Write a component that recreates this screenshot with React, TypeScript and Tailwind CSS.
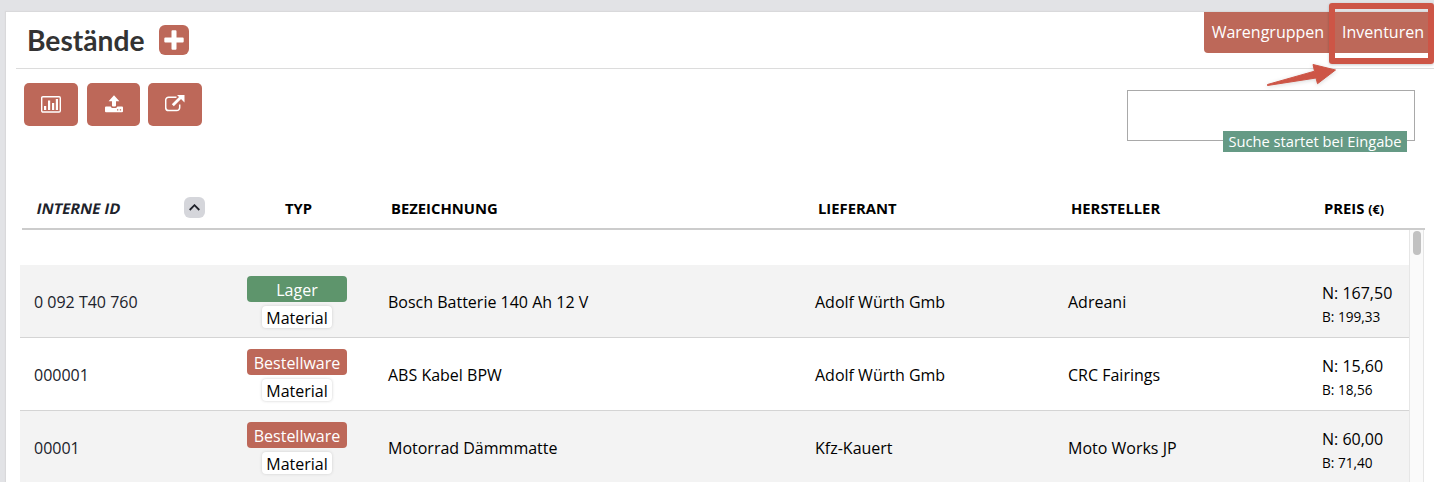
import { clsx } from 'clsx'

const artikel = [
    { id: '0 092 T40 760', typ: 'Lager', bezeichnung: 'Bosch Batterie 140 Ah 12 V', lieferant: 'Adolf Würth Gmb', hersteller: 'Adreani', netto: '167,50', brutto: '199,33' },
    { id: '000001', typ: 'Bestellware', bezeichnung: 'ABS Kabel BPW', lieferant: 'Adolf Würth Gmb', hersteller: 'CRC Fairings', netto: '15,60', brutto: '18,56' },
    { id: '00001', typ: 'Bestellware', bezeichnung: 'Motorrad Dämmmatte', lieferant: 'Kfz-Kauert', hersteller: 'Moto Works JP', netto: '60,00', brutto: '71,40' },
]

const spalten = 'grid grid-cols-[208px_110px_477px_253px_254px_87px]'

function ChartIcon() {
    return (
        <svg width="20" height="17" viewBox="0 0 20 17" fill="currentColor">
            <rect x="0.7" y="0.7" width="18.6" height="15.3" rx="1.2" fill="none" stroke="currentColor" strokeWidth="1.4" />
            <path d="M3 10h2.200v4H3zM7 4.500h2.200V14H7zM11 7h2.200v7H11zM14.800 3H17v11h-2.200z" />
        </svg>
    )
}

function UploadIcon() {
    return (
        <svg width="18" height="18" viewBox="0 0 18 18" fill="currentColor">
            <path d="M9 0.300 14.400 6.200H11v4.300a1 1 0 0 1-1 1H8a1 1 0 0 1-1-1V6.200H3.600z" />
            <path fillRule="evenodd" d="M1 11.500h4.700c.5 1 1.300 1.500 2.300 1.500h2c1 0 1.800-.5 2.300-1.500H17a1 1 0 0 1 1 1v3.700a1 1 0 0 1-1 1H1a1 1 0 0 1-1-1v-3.700a1 1 0 0 1 1-1zM12 14.300v1.200h1.300v-1.200zM14.800 14.300v1.200h1.300v-1.200z" />
        </svg>
    )
}

function ExternalIcon() {
    return (
        <svg width="20" height="17" viewBox="0 0 20 17" fill="none" stroke="currentColor">
            <path strokeWidth="1.500" d="M11.500 2.200H3.700a3 3 0 0 0-3 3v7.400a3 3 0 0 0 3 3h8a3 3 0 0 0 3-3V9.500" />
            <path strokeWidth="2.800" d="m7.800 10.300 8-8" />
            <path fill="currentColor" stroke="none" d="M12 0H19.500V7.500z" />
        </svg>
    )
}

export default function App() {
    return (
        <div className="relative flex h-[482px] w-[1434px] flex-col overflow-hidden bg-[#e2e3e6] pl-1.5 pt-3 font-['Open_Sans',sans-serif] text-base text-black">
            <main className="flex min-h-0 grow flex-col bg-white shadow-[0_0_1px_1px_#d9d9db]">
                {/* Titelzeile */}
                <header className="ml-2.5 flex h-[57px] shrink-0 justify-between border-b border-[#dcdcdc]">
                    <div className="flex items-center pl-[11px]">
                        <h1 className="font-['Lato',sans-serif] text-[28.2px] font-bold leading-none text-[#333]">Bestände</h1>
                        <button className="ml-3.5 flex size-[30px] items-center justify-center rounded-md bg-[#bd6859] text-white">
                            <svg width="20" height="20" viewBox="0 0 20 20" fill="currentColor">
                                <path d="M8.500 0.300h3a1 1 0 0 1 1 1v6.200h6.200a1 1 0 0 1 1 1v3a1 1 0 0 1-1 1h-6.200v6.200a1 1 0 0 1-1 1h-3a1 1 0 0 1-1-1v-6.200H1.300a1 1 0 0 1-1-1v-3a1 1 0 0 1 1-1h6.200V1.300a1 1 0 0 1 1-1z" />
                            </svg>
                        </button>
                    </div>
                    <nav className="flex h-[41px] items-center rounded-bl bg-[#bd6859] pb-0.5 pl-2 pr-2.5 text-white">
                        <a className="mr-[18px]">Warengruppen</a>
                        <a>Inventuren</a>
                    </nav>
                </header>

                {/* Aktionen und Suche */}
                <div className="flex h-[115px] shrink-0 justify-between pl-[18px] pr-[19px]">
                    <div className="flex gap-2 pt-3.5">
                        <button className="flex h-[43px] w-[54px] items-center justify-center rounded-[5px] bg-[#bd6859] pb-px text-white"><ChartIcon /></button>
                        <button className="ml-px flex h-[43px] w-[53px] items-center justify-center rounded-[5px] bg-[#bd6859] pb-0.5 text-white"><UploadIcon /></button>
                        <button className="flex h-[43px] w-[54px] items-center justify-center rounded-[5px] bg-[#bd6859] pb-0.5 text-white"><ExternalIcon /></button>
                    </div>
                    <div className="relative mt-[21px] h-[51px] w-[288px] border border-[#a9a9a9]">
                        <span className="absolute right-[7px] top-10 flex h-[21px] w-[184px] items-center justify-center whitespace-nowrap bg-[#659a85] text-[14.7px] text-white">
                            Suche startet bei Eingabe
                        </span>
                    </div>
                </div>

                {/* Tabellenkopf */}
                <div className={clsx(spalten, 'ml-4 mr-[9px] h-[46px] shrink-0 border-b-2 border-[#ccc] pt-3.5 text-[14.8px] leading-5 font-bold')}>
                    <div className="flex pl-3.5 text-[#20222b]">
                        <span className="-skew-x-12">INTERNE ID</span>
                        <span className="ml-auto mr-[25px] -mt-px flex size-[21px] items-center justify-center rounded-md bg-[#d5d6db]">
                            <svg width="11" height="7" viewBox="0 0 11 7" fill="none" stroke="currentColor" strokeWidth="1.800"><path d="m0.700 6 4.800-4.800L10.300 6" /></svg>
                        </span>
                    </div>
                    <span className="ml-[27px] w-[83px] text-center">TYP</span>
                    <span className="pl-[51px]">BEZEICHNUNG</span>
                    <span className="pl-px">LIEFERANT</span>
                    <span className="pl-px">HERSTELLER</span>
                    <span>PREIS <small className="text-[12.6px]">(€)</small></span>
                </div>

                {/* Tabelleninhalt */}
                <div className="ml-3.5 flex min-h-0 grow">
                    <div className="w-[1389px] overflow-hidden pt-[35px]">
                        {artikel.map((a, i) => (
                            <div key={a.id} className={clsx(spalten, 'h-[73px] items-center border-b border-[#d4d4d4] pt-0.5', i % 2 === 0 && 'bg-[#f3f3f3]')}>
                                <span className="pl-3.5 text-[#20222b]">{a.id}</span>
                                <div className="ml-[19px] flex w-[100px] flex-col items-center gap-1">
                                    <span className={clsx('flex h-[26px] w-full items-center justify-center rounded pt-0.5 text-white', a.typ === 'Lager' ? 'bg-[#5e956c]' : 'bg-[#bd6859]')}>{a.typ}</span>
                                    <span className="flex h-[22px] w-[70px] items-center justify-center rounded bg-white pt-0.5 shadow-[0_0_3px_#ccc]">Material</span>
                                </div>
                                <span className="pl-[50px]">{a.bezeichnung}</span>
                                <span>{a.lieferant}</span>
                                <span>{a.hersteller}</span>
                                <span className="pt-1.5">
                                    <span className="block leading-6">N: {a.netto}</span>
                                    <span className="block text-[13.6px] leading-6">B: {a.brutto}</span>
                                </span>
                            </div>
                        ))}
                    </div>
                    <div className="flex w-[15px] justify-center border-x border-[#e6e6e6] bg-[#fafafa] pt-px">
                        <div className="h-6 w-2 rounded-full bg-[#c1c1c1]" />
                    </div>
                </div>
            </main>

            {/* Markierung mit Pfeil */}
            <div className="absolute left-[1329px] top-[3px] h-[61px] w-[105px] rounded-[3px] border-[6px] border-[#cd5546] shadow-[0_1px_3px_rgba(0,0,0,.2)]" />
            <svg className="absolute left-[1260px] top-[58px] drop-shadow-sm" width="80" height="32" viewBox="1260 58 80 32" fill="#cd5546" stroke="#cd5546" strokeLinejoin="round">
                <path d="M1267.500 84.500 1314.500 71.200l-1.500-6.700 22.500 5.500-18 13.700-1.500-5.700-48.500 7.500z" />
            </svg>
        </div>
    )
}
